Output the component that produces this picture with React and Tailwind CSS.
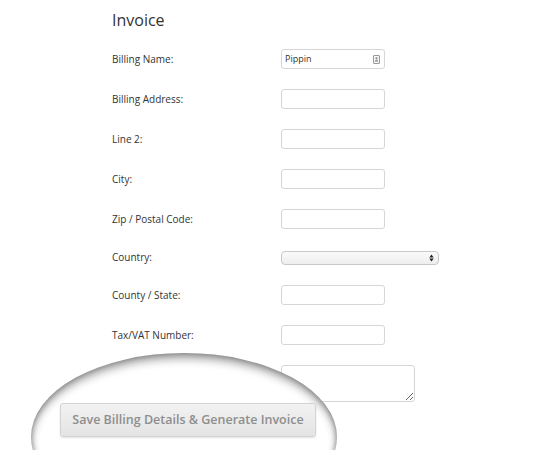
const font = { fontFamily: '"Open Sans", "Liberation Sans", sans-serif' };

const rows = [
  { label: "Billing Name:", value: "Pippin", contact: true },
  { label: "Billing Address:" },
  { label: "Line 2:" },
  { label: "City:" },
  { label: "Zip / Postal Code:" },
  { label: "Country:", select: true },
  { label: "County / State:" },
  { label: "Tax/VAT Number:" },
];

const ContactIcon = () => (
  <svg width="7" height="9" viewBox="0 0 7 9" className="shrink-0">
    <rect x="0.5" y="0.5" width="6" height="8" rx="0.5" fill="#f4f4f4" stroke="#9a9a9a" />
    <circle cx="3.5" cy="3.3" r="1.1" fill="#8a8a8a" />
    <path d="M1.7 6.6c0-1.1.8-1.7 1.8-1.7s1.8.6 1.8 1.7z" fill="#8a8a8a" />
  </svg>
);

// safari-style up/down select arrows
const SelectArrows = () => (
  <svg
    width="5"
    height="8"
    viewBox="0 0 5 8"
    className="pointer-events-none absolute right-[4px] top-[2px]"
  >
    <path d="M0.3 3.4L2.5 0.6L4.7 3.4z" fill="#222" />
    <path d="M0.3 4.6L2.5 7.4L4.7 4.6z" fill="#222" />
  </svg>
);

const Field = ({ row }) => {
  if (row.select) {
    return (
      <div className="relative mt-[2px] h-[14px] w-[158px] rounded-[4px] border border-[#c9c9c9] bg-gradient-to-b from-[#fafafa] to-[#eeeeee]">
        <select className="h-full w-full appearance-none bg-transparent text-[9px] outline-none" />
        <SelectArrows />
      </div>
    );
  }
  return (
    <div className="flex h-[20px] w-[104px] items-center rounded-[3px] border border-[#d6d6d6] bg-white pl-[3px] pr-[4px]">
      <input
        defaultValue={row.value || ""}
        className="w-full min-w-0 bg-transparent text-[9px] text-[#333] outline-none"
        style={font}
      />
      {row.contact && <ContactIcon />}
    </div>
  );
};

export default function App() {
  return (
    <div className="relative h-[450px] w-[550px] overflow-hidden bg-white text-[#333]" style={font}>
      <div className="pl-[112px] pt-[9px]">
        <h2 className="text-[16px] leading-[22px] text-[#333]">Invoice</h2>

        <div className="mt-[18px] flex flex-col gap-[20px]">
          {rows.map((row) => (
            <div
              key={row.label}
              className={`flex ${row.select ? "h-[16px]" : "h-[20px]"} items-center`}
            >
              <label className="w-[169px] shrink-0 text-[10px]">{row.label}</label>
              <Field row={row} />
            </div>
          ))}

          <div className="flex h-[37px] items-center">
            <label className="w-[169px] shrink-0 text-[10px]">Notes:</label>
            <textarea className="h-[37px] w-[134px] rounded-[3px] border border-[#d6d6d6] bg-white outline-none" />
          </div>
        </div>
      </div>

      {/* magnifier lens over the submit button */}
      <div className="absolute left-[31px] top-[353px] h-[168px] w-[306px] rounded-[50%] bg-white shadow-[inset_0_6px_9px_rgba(0,0,0,0.32),inset_0_0_5px_1px_rgba(0,0,0,0.28)]">
        <div className="pl-[29px] pt-[50px]">
          <button
            className="flex h-[34px] w-[256px] items-center justify-center rounded-[3px] border border-[#d3d3d3] bg-gradient-to-b from-[#f2f2f2] to-[#e4e4e4] text-[12.5px] font-semibold text-[#8e8e8e] shadow-[0_1px_2px_rgba(0,0,0,0.12)]"
            style={font}
          >
            Save Billing Details &amp; Generate Invoice
          </button>
        </div>
      </div>
    </div>
  );
}
